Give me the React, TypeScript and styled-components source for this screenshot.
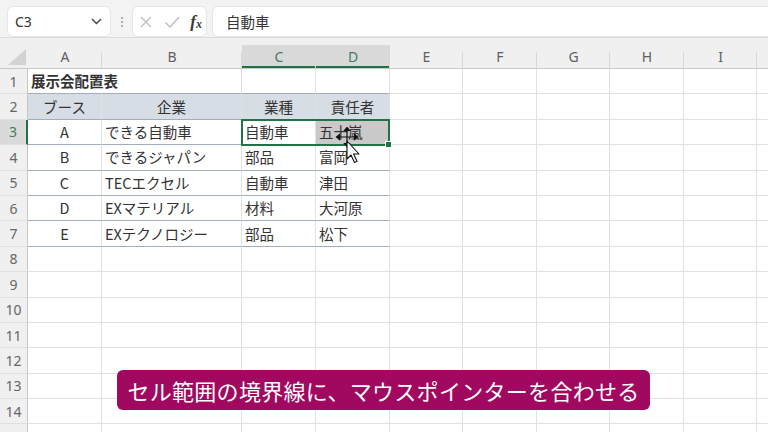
import React, { FC } from "react";
import styled, { createGlobalStyle, css } from "styled-components";

const GREEN = "#217346";
const ROW_H = 25.4;
const JP = `"Noto Sans CJK JP", "Noto Sans", sans-serif`;

interface IColumn {
  key: string;
  width: number;
  label?: string;
}

const COLUMNS: IColumn[] = [
  { key: "A", width: 74 },
  { key: "B", width: 140 },
  { key: "C", width: 74 },
  { key: "D", width: 74 },
  { key: "E", width: 73 },
  { key: "F", width: 74 },
  { key: "G", width: 73 },
  { key: "H", width: 74 },
  { key: "I", width: 73 },
  // 右端で切れている J 列 (見出しは見えない)
  { key: "J", width: 74, label: "" },
];

const SELECTED_COLS = ["C", "D"];
const SELECTED_ROW = 3;

interface ICellData {
  text?: string;
  align?: "left" | "center";
  bold?: boolean;
}

// 表のデータ (A〜D 列)
const DATA: ICellData[][] = [
  [{ text: "展示会配置表", bold: true }],
  [
    { text: "ブース", align: "center" },
    { text: "企業", align: "center" },
    { text: "業種", align: "center" },
    { text: "責任者", align: "center" },
  ],
  [{ text: "A", align: "center" }, { text: "できる自動車" }, { text: "自動車" }, { text: "五十嵐" }],
  [{ text: "B", align: "center" }, { text: "できるジャパン" }, { text: "部品" }, { text: "富岡" }],
  [{ text: "C", align: "center" }, { text: "TECエクセル" }, { text: "自動車" }, { text: "津田" }],
  [{ text: "D", align: "center" }, { text: "EXマテリアル" }, { text: "材料" }, { text: "大河原" }],
  [{ text: "E", align: "center" }, { text: "EXテクノロジー" }, { text: "部品" }, { text: "松下" }],
];

// 14 行目まで番号を表示し、15 行目は下端で少しだけ見える
const VISIBLE_ROWS = 14;
const ROW_COUNT = 15;

const GlobalStyle = createGlobalStyle`
  html, body {
    margin: 0;
    padding: 0;
    background: #f3f3f3;
    font-family: ${JP};
    overflow: hidden;
  }
`;

const FormulaBar: FC = () => (
  <Bar>
    <NameBox>
      <span>C3</span>
      <svg width="11" height="7" viewBox="0 0 11 7">
        <path d="M1 1 L5.5 5.5 L10 1" fill="none" stroke="#444" strokeWidth="1.4" />
      </svg>
    </NameBox>
    <Grip>
      <i />
      <i />
      <i />
    </Grip>
    <FnBox>
      <svg width="14" height="14" viewBox="0 0 14 14">
        <path d="M2 2 L12 12 M12 2 L2 12" stroke="#bdbdbd" strokeWidth="1.3" />
      </svg>
      <svg width="16" height="14" viewBox="0 0 16 14">
        <path d="M1.5 7.5 L6 12 L15 2" fill="none" stroke="#bdbdbd" strokeWidth="1.3" />
      </svg>
      <Fx>
        f<sub>x</sub>
      </Fx>
    </FnBox>
    <FormulaInput>自動車</FormulaInput>
  </Bar>
);

const Sheet: FC = () => (
  <SheetRoot>
    <HeaderRow>
      <Corner>
        <svg width="18" height="16" viewBox="0 0 18 16">
          <path d="M18 0 L18 16 L0 16 Z" fill="#d3d3d3" />
        </svg>
      </Corner>
      {COLUMNS.map((c) => (
        <ColHeader key={c.key} $width={c.width} $selected={SELECTED_COLS.includes(c.key)}>
          {c.label ?? c.key}
        </ColHeader>
      ))}
    </HeaderRow>
    <Body>
      {Array.from({ length: ROW_COUNT }, (_, i) => {
        const rowNo = i + 1;
        const data = DATA[i] ?? [];
        return (
          <Row key={rowNo}>
            <RowHeader $selected={rowNo === SELECTED_ROW}>
              {rowNo <= VISIBLE_ROWS ? rowNo : null}
            </RowHeader>
            {COLUMNS.map((c, ci) => {
              const d = data[ci];
              const inTable = ci < 4 && rowNo <= 7;
              return (
                <Cell
                  key={c.key}
                  $width={c.width}
                  $align={d?.align ?? "left"}
                  $bold={d?.bold}
                  $tableLine={inTable}
                  $head={rowNo === 2 && ci < 4}
                  $shade={rowNo === SELECTED_ROW && c.key === "D"}
                  $noRight={rowNo === 1 && ci === 0}
                >
                  {d?.text}
                </Cell>
              );
            })}
          </Row>
        );
      })}
      <Selection>
        <FillHandle />
      </Selection>
      <Pointer width="30" height="40" viewBox="0 0 30 40">
        <g stroke="#111" strokeWidth="1.2" fill="#111">
          <path d="M5 10 H23 M14 2 V18" fill="none" />
          <path d="M14 0.5 L16.5 3.5 H11.5 Z" />
          <path d="M14 19.5 L11.5 16.5 H16.5 Z" />
          <path d="M3.5 10 L6.5 7.5 V12.5 Z" />
          <path d="M24.5 10 L21.5 7.5 V12.5 Z" />
        </g>
        <path
          d="M14 14 L14 32 L18 28 L21.5 35.5 L24 34.3 L20.6 27 L26 27 Z"
          fill="#fff"
          stroke="#111"
          strokeWidth="1.1"
          strokeLinejoin="round"
        />
      </Pointer>
    </Body>
  </SheetRoot>
);

const App: FC = () => (
  <Root>
    <GlobalStyle />
    <FormulaBar />
    <Sheet />
    <Caption>セル範囲の境界線に、マウスポインターを合わせる</Caption>
  </Root>
);

export default App;

const Root = styled.div`
  position: relative;
  width: 768px;
  height: 432px;
  overflow: hidden;
  background: #f3f3f3;
`;

const Bar = styled.div`
  display: flex;
  align-items: stretch;
  height: 29px;
  padding: 7px 0 1px 8px;
  border-bottom: 1px solid #dddddd;
  background: #f3f3f3;
`;

const boxBase = css`
  background: #ffffff;
  border-radius: 5px;
  box-shadow: 0 0 0 1px #e6e6e6;
  display: flex;
  align-items: center;
`;

const NameBox = styled.div`
  ${boxBase};
  width: 102px;
  box-sizing: border-box;
  padding: 0 8px 0 7px;
  justify-content: space-between;
  font-family: "Noto Sans", "Liberation Sans", sans-serif;
  font-size: 14px;
  color: #333;
`;

const Grip = styled.div`
  width: 23px;
  display: flex;
  flex-direction: column;
  align-items: center;
  justify-content: center;
  gap: 2px;

  i {
    width: 2px;
    height: 2px;
    border-radius: 1px;
    background: #9a9a9a;
  }
`;

const FnBox = styled.div`
  ${boxBase};
  width: 73px;
  box-sizing: border-box;
  padding: 0 4px 0 6px;
  justify-content: space-between;
`;

const Fx = styled.span`
  font-family: "Liberation Serif", "DejaVu Serif", serif;
  font-style: italic;
  font-weight: bold;
  font-size: 17px;
  color: #3a3a3a;
  line-height: 1;

  sub {
    font-size: 12px;
    vertical-align: -1px;
  }
`;

const FormulaInput = styled.div`
  ${boxBase};
  flex: 1;
  margin-left: 7px;
  border-radius: 5px 0 0 5px;
  padding-left: 13px;
  font-size: 14.5px;
  color: #333;
`;

const SheetRoot = styled.div`
  background: #ffffff;
`;

const HeaderRow = styled.div`
  display: flex;
  height: 31px;
  box-sizing: border-box;
  padding-top: 7px;
  background: #f0f0f0;
  border-bottom: 1px solid #c9c9c9;
`;

const Corner = styled.div`
  width: 28px;
  flex: none;
  display: flex;
  align-items: flex-end;
  justify-content: flex-end;
  padding: 0 2px 3px 0;
  box-sizing: border-box;
`;

const ColHeader = styled.div<{ $width: number; $selected?: boolean }>`
  position: relative;
  flex: none;
  width: ${({ $width }) => $width}px;
  display: flex;
  align-items: center;
  justify-content: center;
  font-family: "Noto Sans", "Liberation Sans", sans-serif;
  font-size: 14px;
  color: ${({ $selected }) => ($selected ? "#3f7d5c" : "#606060")};
  background: ${({ $selected }) => ($selected ? "#d9d9d9" : "transparent")};
  box-shadow: ${({ $selected }) => ($selected ? `inset 0 -2px 0 ${GREEN}` : "none")};

  &::after {
    content: "";
    position: absolute;
    right: 0;
    bottom: 0;
    height: 16px;
    border-right: 1px solid #d8d8d8;
  }
`;

const Body = styled.div`
  position: relative;
`;

const Row = styled.div`
  display: flex;
  height: ${ROW_H}px;
`;

const RowHeader = styled.div<{ $selected?: boolean }>`
  flex: none;
  width: 28px;
  box-sizing: border-box;
  display: flex;
  align-items: center;
  justify-content: center;
  background: ${({ $selected }) => ($selected ? "#dadada" : "#f0f0f0")};
  border-right: ${({ $selected }) => ($selected ? `2px solid ${GREEN}` : "1px solid #c6c6c6")};
  border-bottom: 1px solid #e0e0e0;
  font-family: "Noto Sans", "Liberation Sans", sans-serif;
  font-size: 14px;
  color: ${({ $selected }) => ($selected ? "#3f7d5c" : "#666")};
`;

interface ICellProps {
  $width: number;
  $align: "left" | "center";
  $bold?: boolean;
  $tableLine?: boolean;
  $head?: boolean;
  $shade?: boolean;
  $noRight?: boolean;
}

const Cell = styled.div<ICellProps>`
  flex: none;
  width: ${({ $width }) => $width}px;
  box-sizing: border-box;
  display: flex;
  align-items: center;
  justify-content: ${({ $align }) => ($align === "center" ? "center" : "flex-start")};
  padding: 0 3px 1px;
  white-space: nowrap;
  overflow: visible;
  font-size: 14.5px;
  font-weight: ${({ $bold }) => ($bold ? 700 : 400)};
  color: #333333;
  background: ${({ $head, $shade }) => ($shade ? "#c9c9c9" : $head ? "#d7dde4" : "transparent")};
  border-right: 1px solid ${({ $noRight }) => ($noRight ? "transparent" : "#e1e1e1")};
  border-bottom: 1px solid ${({ $tableLine }) => ($tableLine ? "#a3adb8" : "#e1e1e1")};
`;

const Selection = styled.div`
  position: absolute;
  left: 241px;
  top: ${ROW_H * 2 - 1}px;
  width: 149px;
  height: ${ROW_H + 1.5}px;
  box-sizing: border-box;
  border: 2px solid ${GREEN};
  pointer-events: none;
`;

const FillHandle = styled.div`
  position: absolute;
  right: -4px;
  bottom: -4px;
  width: 5px;
  height: 5px;
  background: ${GREEN};
  border: 1px solid #ffffff;
`;

const Pointer = styled.svg`
  position: absolute;
  left: 333px;
  top: 58px;
`;

const Caption = styled.div`
  position: absolute;
  left: 117px;
  top: 370px;
  width: 533px;
  height: 40px;
  box-sizing: border-box;
  border-radius: 6px;
  background: #a1085f;
  color: #ffffff;
  font-family: ${JP};
  font-size: 22px;
  display: flex;
  align-items: center;
  justify-content: center;
  letter-spacing: 0.3px;
`;
